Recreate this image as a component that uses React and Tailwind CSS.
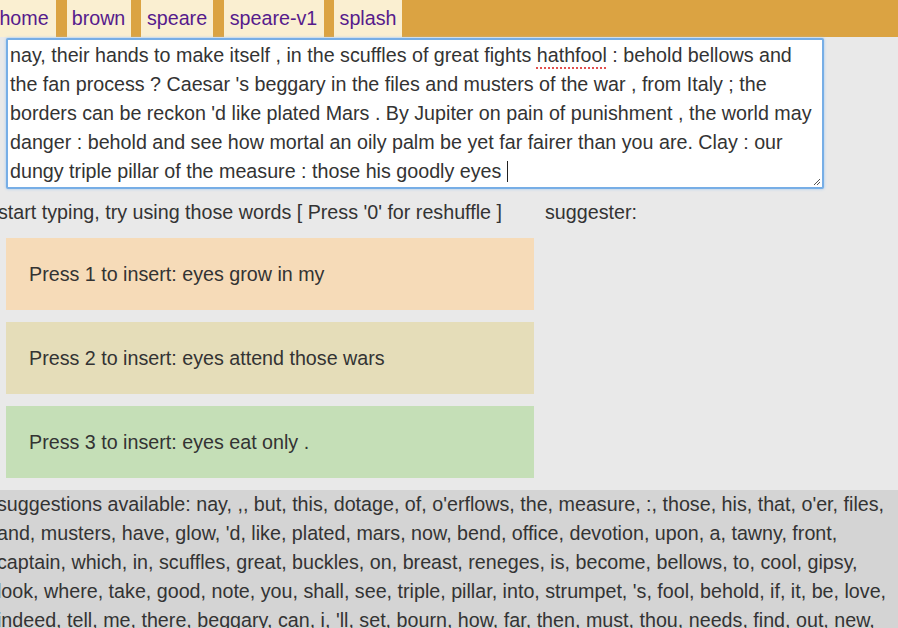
import React from 'react';

const tabs = [
  { label: 'home', width: 'w-[64px]' },
  { label: 'brown', width: 'w-[64px]' },
  { label: 'speare', width: 'w-[72px]' },
  { label: 'speare-v1', width: 'w-[100px]' },
  { label: 'splash', width: 'w-[68px]' }
];

const draftLines = [
  "the fan process ? Caesar 's beggary in the files and musters of the war , from Italy ; the",
  "borders can be reckon 'd like plated Mars . By Jupiter on pain of punishment , the world may",
  'danger : behold and see how mortal an oily palm be yet far fairer than you are. Clay : our'
];

const choices = [
  { text: 'Press 1 to insert: eyes grow in my', color: 'bg-[#f6dbb8]' },
  { text: 'Press 2 to insert: eyes attend those wars', color: 'bg-[#e5ddb9]' },
  { text: 'Press 3 to insert: eyes eat only .', color: 'bg-[#c5dfb7]' }
];

const available = [
  "suggestions available: nay, ,, but, this, dotage, of, o'erflows, the, measure, :, those, his, that, o'er, files,",
  "and, musters, have, glow, 'd, like, plated, mars, now, bend, office, devotion, upon, a, tawny, front,",
  'captain, which, in, scuffles, great, buckles, on, breast, reneges, is, become, bellows, to, cool, gipsy,',
  "look, where, take, good, note, you, shall, see, triple, pillar, into, strumpet, 's, fool, behold, if, it, be, love,",
  "indeed, tell, me, there, beggary, can, i, 'll, set, bourn, how, far, then, must, thou, needs, find, out, new,",
  'heaven, new, earth, the, triple, pillar, of, world, transformed, into, a, fool, take'
];

const App = () => {
  return (
    <div className="w-[898px] h-[628px] overflow-hidden bg-[#e9e9e9] text-[#333] font-['Liberation_Sans',Arial,sans-serif] text-[19.7px] leading-[29px]">
      {/* page is scrolled a few px to the right */}
      <div className="-ml-[8px] w-[906px]">
        <nav className="flex gap-[10.5px] h-[37px] bg-[#dba342]">
          {tabs.map((tab) => (
            <a
              key={tab.label}
              className={`${tab.width} h-[37px] flex items-center justify-center bg-[#faefd1] text-[#561b8c]`}
            >
              {tab.label}
            </a>
          ))}
        </nav>

        <div className="ml-[14px] mt-[1px] w-[818px] h-[151px] bg-white border-2 border-[#77aee6] shadow-[0_0_3px_#9cc6f0] rounded-[2px] pl-[2px] pt-[1px] relative">
          <div className="whitespace-nowrap">
            nay, their hands to make itself , in the scuffles of great fights{' '}
            <span className="underline decoration-dotted decoration-[#e2504f] decoration-2 underline-offset-[5px]">hathfool</span>{' '}
            : behold bellows and
          </div>
          {draftLines.map((line, i) => (
            <div key={i} className="whitespace-nowrap">{line}</div>
          ))}
          <div className="whitespace-nowrap flex items-center">
            <span>dungy triple pillar of the measure : those his goodly eyes&nbsp;</span>
            <span className="inline-block w-px h-[21px] bg-[#222]"></span>
          </div>
          <svg className="absolute right-[1px] bottom-[1px]" width="9" height="9" viewBox="0 0 9 9">
            <path d="M8 2 L2 8 M8 5 L5 8" stroke="#555" strokeWidth="1" />
          </svg>
        </div>

        <div className="flex mt-[9px]">
          <div className="w-[536px] ml-[6px]">
            <p className="whitespace-nowrap">start typing, try using those words [ Press '0' for reshuffle ]</p>
            <div className="mt-[11px] ml-[8px] w-[528px] flex flex-col gap-[12px]">
              {choices.map((choice, index) => (
                <div key={index} className={`h-[72px] flex items-center pl-[23px] ${choice.color}`}>
                  {choice.text}
                </div>
              ))}
            </div>
          </div>
          <p className="ml-[11px]">suggester:</p>
        </div>

        <div className="mt-[12px] bg-[#d4d4d4] pl-[5px] h-[200px]">
          {available.map((line, i) => (
            <div key={i} className="whitespace-nowrap">{line}</div>
          ))}
        </div>
      </div>
    </div>
  );
};

export default App;
